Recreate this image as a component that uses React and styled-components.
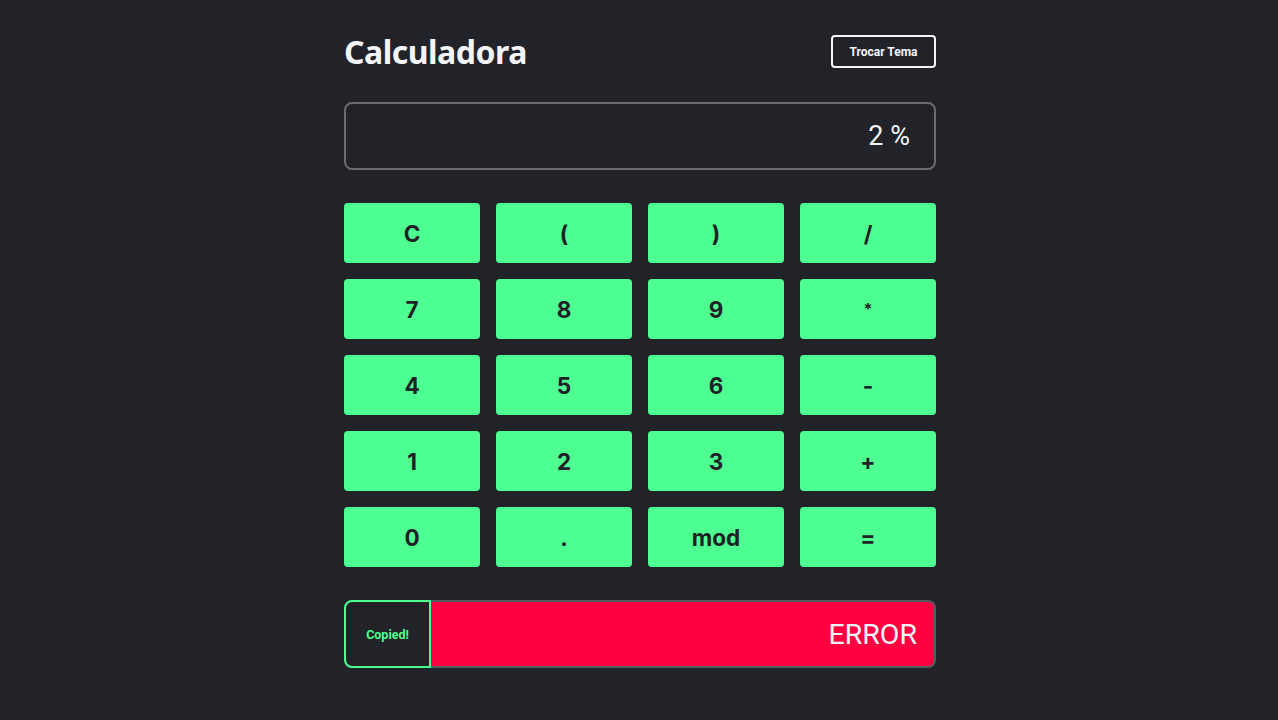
import React from 'react'
import styled, { createGlobalStyle } from 'styled-components'

const GlobalStyle = createGlobalStyle`
  html, body {
    margin: 0;
    padding: 0;
    background: #212328;
  }
  body {
    font-family: Inter, 'Liberation Sans', sans-serif;
    min-height: 720px;
  }
`

const keys = ['C', '(', ')', '/', '7', '8', '9', '*', '4', '5', '6', '-', '1', '2', '3', '+', '0', '.', 'mod', '=']

const App = () => {
  return (
    <Wrapper>
      <GlobalStyle />
      <div className='calc'>
        <header>
          <h1>Calculadora</h1>
          <ThemeButton>Trocar Tema</ThemeButton>
        </header>

        <Display>2 %</Display>

        <Keypad>
          {keys.map((k) => (
            <Key key={k} $small={k === '*'}>
              {k}
            </Key>
          ))}
        </Keypad>

        <Result>
          <CopyBox>Copied!</CopyBox>
          <Output $error>ERROR</Output>
        </Result>
      </div>
    </Wrapper>
  )
}

const Wrapper = styled.main`
  display: flex;
  justify-content: center;
  padding-top: 35px;
  padding-left: 2px;
  .calc {
    width: 592px;
  }
  header {
    display: flex;
    justify-content: space-between;
    align-items: center;
    height: 33px;
  }
  h1 {
    margin: 0;
    color: #f4f5f8;
    font-family: 'Noto Sans', 'Open Sans', sans-serif;
    font-weight: 700;
    font-size: 32px;
    letter-spacing: -0.5px;
  }
`

const ThemeButton = styled.button`
  width: 105px;
  height: 33px;
  background: transparent;
  border: 2px solid #f4f5f8;
  border-radius: 4px;
  color: #f4f5f8;
  font-family: Roboto, 'Liberation Sans', sans-serif;
  font-weight: 700;
  font-size: 12px;
  padding: 0;
`

const Display = styled.div`
  margin-top: 34px;
  height: 68px;
  box-sizing: border-box;
  border: 2px solid #6b6c70;
  border-radius: 8px;
  display: flex;
  align-items: center;
  justify-content: flex-end;
  padding-right: 24px;
  color: #f4f5f8;
  font-family: Roboto, 'Liberation Sans', sans-serif;
  font-size: 27px;
`

const Keypad = styled.div`
  margin-top: 33px;
  display: grid;
  grid-template-columns: repeat(4, 136px);
  grid-auto-rows: 60px;
  gap: 16px;
`

const Key = styled.button`
  border: none;
  border-radius: 4px;
  background: #4eff91;
  color: #1f2126;
  font-family: Inter, 'Liberation Sans', sans-serif;
  font-weight: 700;
  font-size: ${(p) => (p.$small ? '16px' : '22.5px')};
  padding: 0;
`

const Result = styled.div`
  margin-top: 33px;
  display: flex;
  height: 68px;
`

const CopyBox = styled.div`
  width: 87px;
  box-sizing: border-box;
  border: 2px solid #4eff91;
  border-radius: 8px 0 0 8px;
  display: flex;
  align-items: center;
  justify-content: center;
  color: #4eff91;
  font-family: Roboto, 'Liberation Sans', sans-serif;
  font-weight: 700;
  font-size: 12.5px;
`

const Output = styled.div`
  flex: 1;
  box-sizing: border-box;
  border: 2px solid #5a5b60;
  border-left: none;
  border-radius: 0 8px 8px 0;
  background: ${(p) => (p.$error ? '#ff0040' : 'transparent')};
  display: flex;
  align-items: center;
  justify-content: flex-end;
  padding-right: 17px;
  color: #f4f5f8;
  font-family: Roboto, 'Liberation Sans', sans-serif;
  font-size: 28.5px;
`

export default App
